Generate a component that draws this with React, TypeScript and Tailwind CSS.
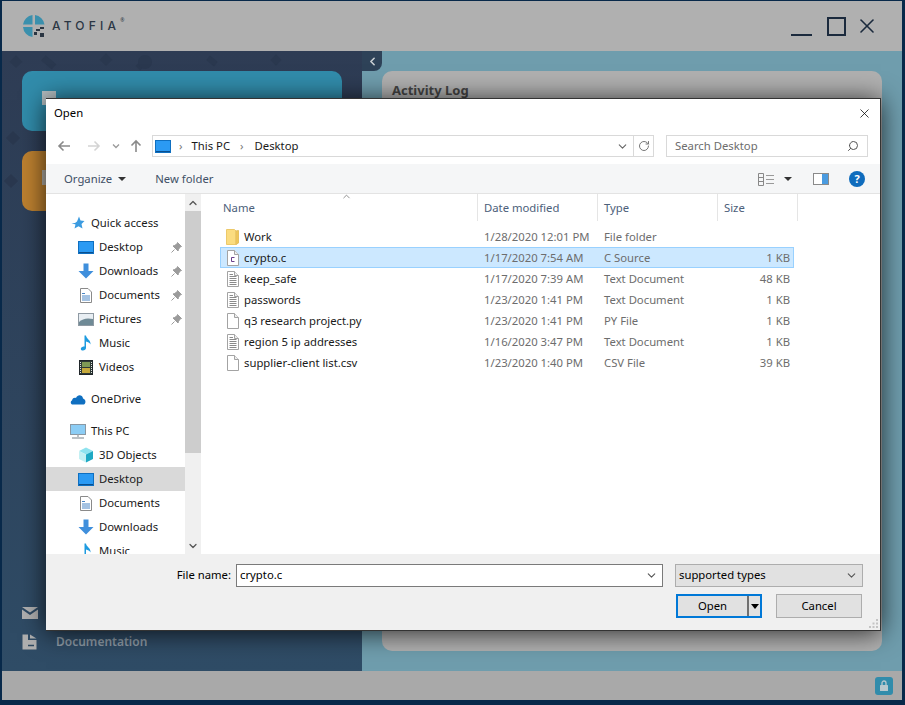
import React from "react";
import { ChevronDown, ChevronLeft, ChevronUp, RotateCw, Search, X } from "lucide-react";

const FONT = "font-['Noto_Sans','Open_Sans',sans-serif]";

const FILES = [
  { name: "Work", date: "1/28/2020 12:01 PM", type: "File folder", size: "", icon: "folder" },
  { name: "crypto.c", date: "1/17/2020 7:54 AM", type: "C Source", size: "1 KB", icon: "c", selected: true },
  { name: "keep_safe", date: "1/17/2020 7:39 AM", type: "Text Document", size: "48 KB", icon: "text" },
  { name: "passwords", date: "1/23/2020 1:41 PM", type: "Text Document", size: "1 KB", icon: "text" },
  { name: "q3 research project.py", date: "1/23/2020 1:41 PM", type: "PY File", size: "1 KB", icon: "blank" },
  { name: "region 5 ip addresses", date: "1/16/2020 3:47 PM", type: "Text Document", size: "1 KB", icon: "text" },
  { name: "supplier-client list.csv", date: "1/23/2020 1:40 PM", type: "CSV File", size: "39 KB", icon: "blank" },
];

function FileIcon({ kind }: { kind: string }) {
  if (kind === "folder") {
    return (
      <svg width="13" height="16" viewBox="0 0 13 16">
        <path d="M0.5 0.5 H8.5 L10 2 V15.5 H0.5 Z" fill="#fbdc80" stroke="#ecc96a" />
        <path d="M10 2 L12.5 1.5 V14 L10 15.5 Z" fill="#f0c659" stroke="#e5c061" />
      </svg>
    );
  }
  return (
    <svg width="12" height="16" viewBox="0 0 12 16">
      <path d="M0.5 0.5 H7.5 L11.5 4.5 V15.5 H0.5 Z" fill="#fff" stroke="#a3a3a3" />
      <path d="M7.5 0.5 V4.5 H11.5" fill="#eee" stroke="#a3a3a3" />
      {kind === "text" && (
        <path d="M2.5 3.5 H6 M2.5 5.5 H9.5 M2.5 7.5 H9.5 M2.5 9.5 H9.5 M2.5 11.5 H9.5 M2.5 13.5 H9.5" stroke="#8a8a8a" />
      )}
      {kind === "c" && <path d="M7.5 7.5 H4.5 V11.5 H7.5" fill="none" stroke="#6a3f8c" />}
    </svg>
  );
}

function NavIcon({ kind }: { kind: string }) {
  switch (kind) {
    case "star":
      return (
        <svg width="14" height="14" viewBox="0 0 14 14">
          <path d="M8 0.5 L9.5 4.5 L13.5 5 L10.5 8 L11.5 12.5 L7.5 10.2 L3.5 12.5 L4.5 8.5 L0.5 7 H4 L6 5.5 Z" fill="#3b9be0" />
        </svg>
      );
    case "desktop":
      return (
        <svg width="16" height="13" viewBox="0 0 16 13">
          <rect x="0.5" y="0.5" width="15" height="12" fill="#2b9af3" stroke="#0f6fc0" />
          <path d="M1 11.5 H15" stroke="#0a4f8e" />
        </svg>
      );
    case "down":
      return (
        <svg width="16" height="16" viewBox="0 0 16 16">
          <path d="M5.5 0.5 H10.5 V8 H15.5 L8 15.5 L0.5 8 H5.5 Z" fill="#3f8fdc" />
        </svg>
      );
    case "doc":
      return (
        <svg width="12" height="15" viewBox="0 0 12 15">
          <path d="M0.5 0.5 H8 L11.5 4 V14.5 H0.5 Z" fill="#fff" stroke="#8a8a8a" />
          <path d="M2 5.5 H5 M2 8 H10 M2 10 H10 M2 12 H10" stroke="#4a86c5" />
        </svg>
      );
    case "pictures":
      return (
        <svg width="16" height="13" viewBox="0 0 16 13">
          <rect x="0.5" y="0.5" width="15" height="12" fill="#e8eef3" stroke="#8f9aa3" />
          <path d="M1 9 Q6 4 15 6 V12 H1 Z" fill="#6f8a96" />
        </svg>
      );
    case "music":
      return (
        <svg width="12" height="16" viewBox="0 0 12 16">
          <path d="M4.5 0.5 H6 C6.5 4 11 5 10.5 9.5 C9.5 7.5 8 7 6 6.5 V13 C6 15 3.5 16 1.5 15.2 C0 14 1 11.5 4.5 11.5 Z" fill="#1e9be0" />
        </svg>
      );
    case "videos":
      return (
        <svg width="14" height="15" viewBox="0 0 14 15">
          <rect x="0.5" y="0.5" width="13" height="14" fill="#2f3a36" stroke="#20262a" />
          <rect x="3" y="2" width="8" height="5" fill="#7f9a55" />
          <rect x="3" y="8" width="8" height="5" fill="#c5a93c" />
          <path d="M1.5 2 V13 M12.5 2 V13" stroke="#dfe3e0" strokeDasharray="1 1" />
        </svg>
      );
    case "cloud":
      return (
        <svg width="16" height="11" viewBox="0 0 16 11">
          <path d="M3 10.5 C0.5 10.5 0 7.5 2 6.5 C2.5 3.5 5 3.5 6 4 C7.5 0 12.5 0.5 13 4.5 C15.5 5 16.5 8.5 14 10.5 Z" fill="#0f6fc0" />
        </svg>
      );
    case "pc":
      return (
        <svg width="16" height="15" viewBox="0 0 16 15">
          <rect x="0.5" y="0.5" width="15" height="10" fill="#8ccdf5" stroke="#8a98a3" />
          <path d="M8 10.5 V13 M2 14 H14" stroke="#a5adb3" strokeWidth="1.5" />
        </svg>
      );
    case "cube":
      return (
        <svg width="16" height="16" viewBox="0 0 16 16">
          <path d="M8 0.5 L15 4 L8 7.5 L1 4 Z" fill="#8fe3ef" />
          <path d="M1 4 L8 7.5 V15.5 L1 12 Z" fill="#c3f0f3" />
          <path d="M15 4 L8 7.5 V15.5 L15 12 Z" fill="#1fa9c4" />
        </svg>
      );
    default:
      return null;
  }
}

function Pin() {
  return (
    <svg width="11" height="11" viewBox="0 0 11 11">
      <path d="M6.5 0.5 L10.5 4.5 L9 5 L7.5 7.5 L7 9 L2 4 L3.5 3.5 L6 2 Z M3.5 7.5 L0.5 10.5" fill="#9b9b9b" stroke="#9b9b9b" />
    </svg>
  );
}

function NavRow({ icon, label, pin, top, active, className }: { icon: string; label: string; pin?: boolean; top?: boolean; active?: boolean; className?: string }) {
  return (
    <div className={`flex h-6 shrink-0 items-center ${active ? "bg-[#d9d9d9]" : ""} ${className ?? ""}`}>
      <div className={`flex w-4 justify-center ${top ? "ml-6" : "ml-8"}`}>
        <NavIcon kind={icon} />
      </div>
      <span className="ml-[5px] text-[11.3px] leading-none text-[#1a1a1a]">{label}</span>
      {pin && (
        <span className="ml-auto mr-[3px] flex">
          <Pin />
        </span>
      )}
    </div>
  );
}

function HeaderCell({ label }: { label: string }) {
  return (
    <div className="flex h-[27px] items-center border-r border-[#e5e5e5] pl-[6px] pt-[2px] text-[11.3px] text-[#4c607a]">{label}</div>
  );
}

function FileDialog() {
  return (
    <div className="absolute left-[46px] top-[98px] flex h-[533px] w-[835px] flex-col border border-l-0 border-[#333] bg-white shadow-[0_2px_24px_rgba(0,0,0,0.75)]">
      <div className="flex h-[31px] shrink-0 items-center justify-between pb-[2px] pl-[8px] pr-[8px] text-[11.3px] text-black">
        <span>Open</span>
        <X size={15} strokeWidth={1.2} className="text-black" />
      </div>

      <div className="flex h-[34px] shrink-0 items-center pb-[2px]">
        <svg width="90" height="16" viewBox="0 0 90 16" className="ml-[10px] shrink-0">
          <path d="M14 8 H3 M7.5 3.5 L3 8 L7.5 12.5" fill="none" stroke="#8a8a8a" strokeWidth="1.6" />
          <path d="M32 8 H43 M38.5 3.5 L43 8 L38.5 12.5" fill="none" stroke="#d4d4d4" strokeWidth="1.6" />
          <path d="M57 6.5 L60 9.5 L63 6.5" fill="none" stroke="#9a9a9a" strokeWidth="1.3" />
          <path d="M80 14 V3 M75.5 7.5 L80 3 L84.5 7.5" fill="none" stroke="#8a8a8a" strokeWidth="1.6" />
        </svg>
        <div className="ml-[6px] flex h-[22px] w-[502px] items-center border border-[#d9d9d9] pl-[2px] text-[11.3px] text-[#1a1a1a]">
          <NavIcon kind="desktop" />
          <span className="ml-[8px] text-[#777]">›</span>
          <span className="ml-[9px]">This PC</span>
          <span className="ml-[10px] text-[#777]">›</span>
          <span className="ml-[11px]">Desktop</span>
          <ChevronDown size={13} className="ml-auto mr-[4px] text-[#666]" />
          <div className="flex h-full w-[20px] items-center justify-center border-l border-[#d9d9d9]">
            <RotateCw size={12} className="text-[#777]" />
          </div>
        </div>
        <div className="ml-[12px] flex h-[22px] w-[202px] items-center justify-between border border-[#d9d9d9] px-[8px] text-[11.3px] text-[#6d6d6d]">
          <span>Search Desktop</span>
          <Search size={12} className="-scale-x-100 text-[#555]" />
        </div>
      </div>

      <div className="flex h-[30px] shrink-0 items-center border-b border-[#e3e3e3] bg-[#f5f6f7] pt-[1px] text-[11.3px] text-[#3f5066]">
        <span className="ml-[18px]">Organize</span>
        <span className="ml-[6px] h-0 w-0 border-x-[4px] border-t-[4px] border-x-transparent border-t-[#333]" />
        <span className="ml-[29px]">New folder</span>
        <svg width="17" height="13" viewBox="0 0 17 13" className="ml-auto">
          <path d="M0.5 0.5 H5.5 V12.5 H0.5 Z M0.5 4.5 H5.5 M0.5 8.5 H5.5" fill="none" stroke="#888" />
          <path d="M8 2.5 H16 M8 6.5 H16 M8 10.5 H16" stroke="#999" />
        </svg>
        <span className="ml-[9px] h-0 w-0 border-x-[4px] border-t-[4px] border-x-transparent border-t-[#333]" />
        <svg width="16" height="12" viewBox="0 0 16 12" className="ml-[21px]">
          <rect x="0.5" y="0.5" width="15" height="11" fill="#fff" stroke="#8a8a8a" />
          <rect x="9" y="1" width="6" height="10" fill="#4a9be0" />
        </svg>
        <span className="ml-[20px] mr-[15px] flex h-4 w-4 items-center justify-center rounded-full bg-[#0f6cbd] text-[11px] font-bold text-white">?</span>
      </div>

      <div className="flex min-h-0 flex-1 overflow-hidden">
        <div className="flex w-[139px] shrink-0 flex-col overflow-hidden pt-[17px]">
          <NavRow top icon="star" label="Quick access" />
          <NavRow icon="desktop" label="Desktop" pin />
          <NavRow icon="down" label="Downloads" pin />
          <NavRow icon="doc" label="Documents" pin />
          <NavRow icon="pictures" label="Pictures" pin />
          <NavRow icon="music" label="Music" />
          <NavRow icon="videos" label="Videos" />
          <NavRow top icon="cloud" label="OneDrive" className="mt-2" />
          <NavRow top icon="pc" label="This PC" className="mt-2" />
          <NavRow icon="cube" label="3D Objects" />
          <NavRow icon="desktop" label="Desktop" active />
          <NavRow icon="doc" label="Documents" />
          <NavRow icon="down" label="Downloads" />
          <NavRow icon="music" label="Music" />
        </div>
        <div className="flex w-[16px] shrink-0 flex-col bg-[#f0f0f0]">
          <div className="flex h-[17px] items-center justify-center">
            <ChevronUp size={12} strokeWidth={2.5} className="text-[#555]" />
          </div>
          <div className="h-[242px] bg-[#cdcdcd]" />
          <div className="mt-auto flex h-[17px] items-center justify-center">
            <ChevronDown size={12} strokeWidth={2.5} className="text-[#555]" />
          </div>
        </div>

        <div className="relative min-w-0 flex-1 pl-[16px]">
          <ChevronUp size={11} className="absolute left-[140px] top-[-3px] text-[#888]" />
          <div className="grid grid-cols-[261px_120px_120px_80px]">
            <HeaderCell label="Name" />
            <HeaderCell label="Date modified" />
            <HeaderCell label="Type" />
            <HeaderCell label="Size" />
          </div>
          <div className="ml-[3px] mt-[5px] w-[574px]">
            {FILES.map((file) => (
              <div
                key={file.name}
                className={`grid h-[21px] grid-cols-[257px_120px_120px_75px] items-center border pt-[1px] text-[11.3px] ${file.selected ? "border-[#99d1ff] bg-[#cce8ff]" : "border-transparent"}`}
              >
                <div className="flex items-center pl-[5px] text-[#1a1a1a]">
                  <span className="flex w-[13px] justify-center">
                    <FileIcon kind={file.icon} />
                  </span>
                  <span className="ml-[5px]">{file.name}</span>
                </div>
                <div className="pl-[6px] text-[#6d6d6d]">{file.date}</div>
                <div className="pl-[6px] text-[#6d6d6d]">{file.type}</div>
                <div className="pr-[3px] text-right text-[#6d6d6d]">{file.size}</div>
              </div>
            ))}
          </div>
        </div>
      </div>

      <div className="relative h-[76px] shrink-0 bg-[#f0f0f0] text-[11.3px] text-black">
        <div className="flex items-center justify-end pr-[17px] pt-[10px]">
          <span className="mr-[5px]">File name:</span>
          <div className="flex h-[23px] w-[427px] items-center justify-between border border-[#7a7a7a] bg-white pl-[3px] pr-[4px]">
            <span>crypto.c</span>
            <ChevronDown size={13} className="text-[#555]" />
          </div>
          <div className="ml-[12px] flex h-[23px] w-[188px] items-center justify-between border border-[#adadad] bg-[#e1e1e1] pl-[3px] pr-[4px]">
            <span>supported types</span>
            <ChevronDown size={13} className="text-[#555]" />
          </div>
        </div>
        <div className="mt-[7px] flex justify-end pr-[18px]">
          <div className="flex h-6 w-[86px] items-center border-2 border-[#0078d7] bg-[#e1e1e1]">
            <span className="flex-1 text-center">Open</span>
            <span className="flex h-full w-[13px] items-center justify-center border-l-2 border-[#707070]">
              <span className="h-0 w-0 border-x-[4px] border-t-[5px] border-x-transparent border-t-black" />
            </span>
          </div>
          <div className="ml-[14px] flex h-6 w-[86px] items-center justify-center border border-[#adadad] bg-[#e1e1e1]">Cancel</div>
        </div>
        <svg width="11" height="11" viewBox="0 0 11 11" className="absolute bottom-[1px] right-[1px]">
          <path d="M8 1 h2 v2 h-2 Z M4.5 4.5 h2 v2 h-2 Z M8 4.5 h2 v2 h-2 Z M1 8 h2 v2 h-2 Z M4.5 8 h2 v2 h-2 Z M8 8 h2 v2 h-2 Z" fill="#c4c4c4" />
        </svg>
      </div>
    </div>
  );
}

export default function App() {
  return (
    <div className={`relative flex h-[705px] w-[905px] flex-col overflow-hidden bg-[#08294a] pb-[5px] pl-[2px] pr-[3px] pt-[1px] ${FONT}`}>
      <header className="flex h-[50px] shrink-0 items-center bg-[#b0b0b0] pl-[20px]">
        <svg width="24" height="24" viewBox="0 0 24 24">
          <path d="M10.5 1 V10.5 H1 A11 11 0 0 1 10.5 1 Z M13 1 A11 11 0 0 1 22.5 10.5 H13 Z M1 13 H10.5 V23 A11 11 0 0 1 1 13 Z" fill="#3b90ad" />
          <path d="M14 15 h4 v2 h-4 Z M18 13 h4 v2 h-4 Z M12 18 h3 v3 h-3 Z M18 19 h4 v4 h-4 Z" fill="#2a3542" />
        </svg>
        <span className="ml-[6px] font-['Inter',sans-serif] text-[12px] font-medium leading-none tracking-[4.2px] text-[#2b3644]">ATOFIA</span>
        <span className="mb-[10px] text-[5px] text-[#2b3644]">®</span>
        <div className="ml-auto mr-[23px] flex items-center">
          <span className="mt-[18px] h-[2px] w-[21px] bg-[#1b2a3d]" />
          <span className="ml-[15px] h-[19px] w-[19px] border-2 border-[#1b2a3d]" />
          <X size={24} strokeWidth={1.6} className="ml-[9px] text-[#1b2a3d]" />
        </div>
      </header>

      <div className="flex min-h-0 flex-1">
        <aside className="relative flex w-[360px] shrink-0 flex-col bg-gradient-to-b from-[#2e3c54] to-[#2f4c66] px-[20px] pt-[20px]">
          <svg width="360" height="165" viewBox="0 0 360 165" className="absolute left-0 top-0">
            <g fill="#2a384f">
              <rect x="10" y="6" width="9" height="9" transform="rotate(45 14 10)" />
              <rect x="40" y="8" width="14" height="7" transform="rotate(40 47 11)" />
              <rect x="100" y="4" width="9" height="9" transform="rotate(45 104 8)" />
              <rect x="135" y="12" width="6" height="6" transform="rotate(45 138 15)" />
              <circle cx="143" cy="11" r="7" />
              <rect x="205" y="7" width="10" height="6" transform="rotate(40 210 10)" />
              <rect x="270" y="5" width="8" height="8" transform="rotate(45 274 9)" />
              <rect x="6" y="82" width="10" height="10" transform="rotate(45 11 87)" />
              <rect x="4" y="125" width="10" height="10" transform="rotate(45 9 130)" />
            </g>
          </svg>
          <div className="relative h-[60px] rounded-[10px] bg-[#318cab]">
            <span className="absolute left-[20px] top-[20px] h-[14px] w-[14px] bg-[#b5bfc2]" />
          </div>
          <div className="relative mt-[20px] h-[60px] rounded-[10px] bg-[#bd8130]">
            <span className="absolute left-[20px] top-[19px] h-[15px] w-[14px] bg-[#b5b0a8]" />
          </div>
          <div className="mt-auto flex flex-col pb-[20px] text-[12px] font-semibold text-[#8e9ba6]">
            <svg width="16" height="12" viewBox="0 0 16 12" className="mb-[14px]">
              <path d="M0 0 H16 L8 5.5 Z M0 2.5 L8 8 L16 2.5 V12 H0 Z" fill="#b0b0b0" />
            </svg>
            <div className="flex items-center">
              <svg width="15" height="16" viewBox="0 0 15 16">
                <path d="M0.5 0.5 H6 V6 H14.5 V15.5 H0.5 Z M8 0.5 L14.5 4.5 H8 Z" fill="#b0b0b0" />
                <path d="M6 11.5 H12" stroke="#2f4a62" strokeWidth="1.5" />
              </svg>
              <span className="ml-[19px]">Documentation</span>
            </div>
          </div>
        </aside>
        <main className="relative flex min-w-0 flex-1 bg-[#6f9dad] p-[20px]">
          <div className="absolute left-0 top-0 flex h-[20px] w-[20px] items-center justify-center rounded-br-[8px] bg-[#2e4258]">
            <ChevronLeft size={13} strokeWidth={3} className="text-[#c9ced2]" />
          </div>
          <div className="flex-1 rounded-[10px] bg-[#b0b0b0] px-[10px] pt-[10px]">
            <h1 className="text-[13px] font-bold text-[#444]">Activity Log</h1>
          </div>
        </main>
      </div>

      <footer className="flex h-[29px] shrink-0 items-center justify-end bg-[#a9a9a9] pr-[9px]">
        <span className="flex h-[18px] w-[18px] items-center justify-center rounded-[3px] bg-[#318cab]">
          <svg width="8" height="11" viewBox="0 0 8 11">
            <path d="M2 5 V3 A2 2 0 0 1 6 3 V5" fill="none" stroke="#b8c8ce" strokeWidth="1.3" />
            <rect x="0" y="5" width="8" height="6" rx="0.5" fill="#b8c8ce" />
          </svg>
        </span>
      </footer>

      <FileDialog />
    </div>
  );
}
